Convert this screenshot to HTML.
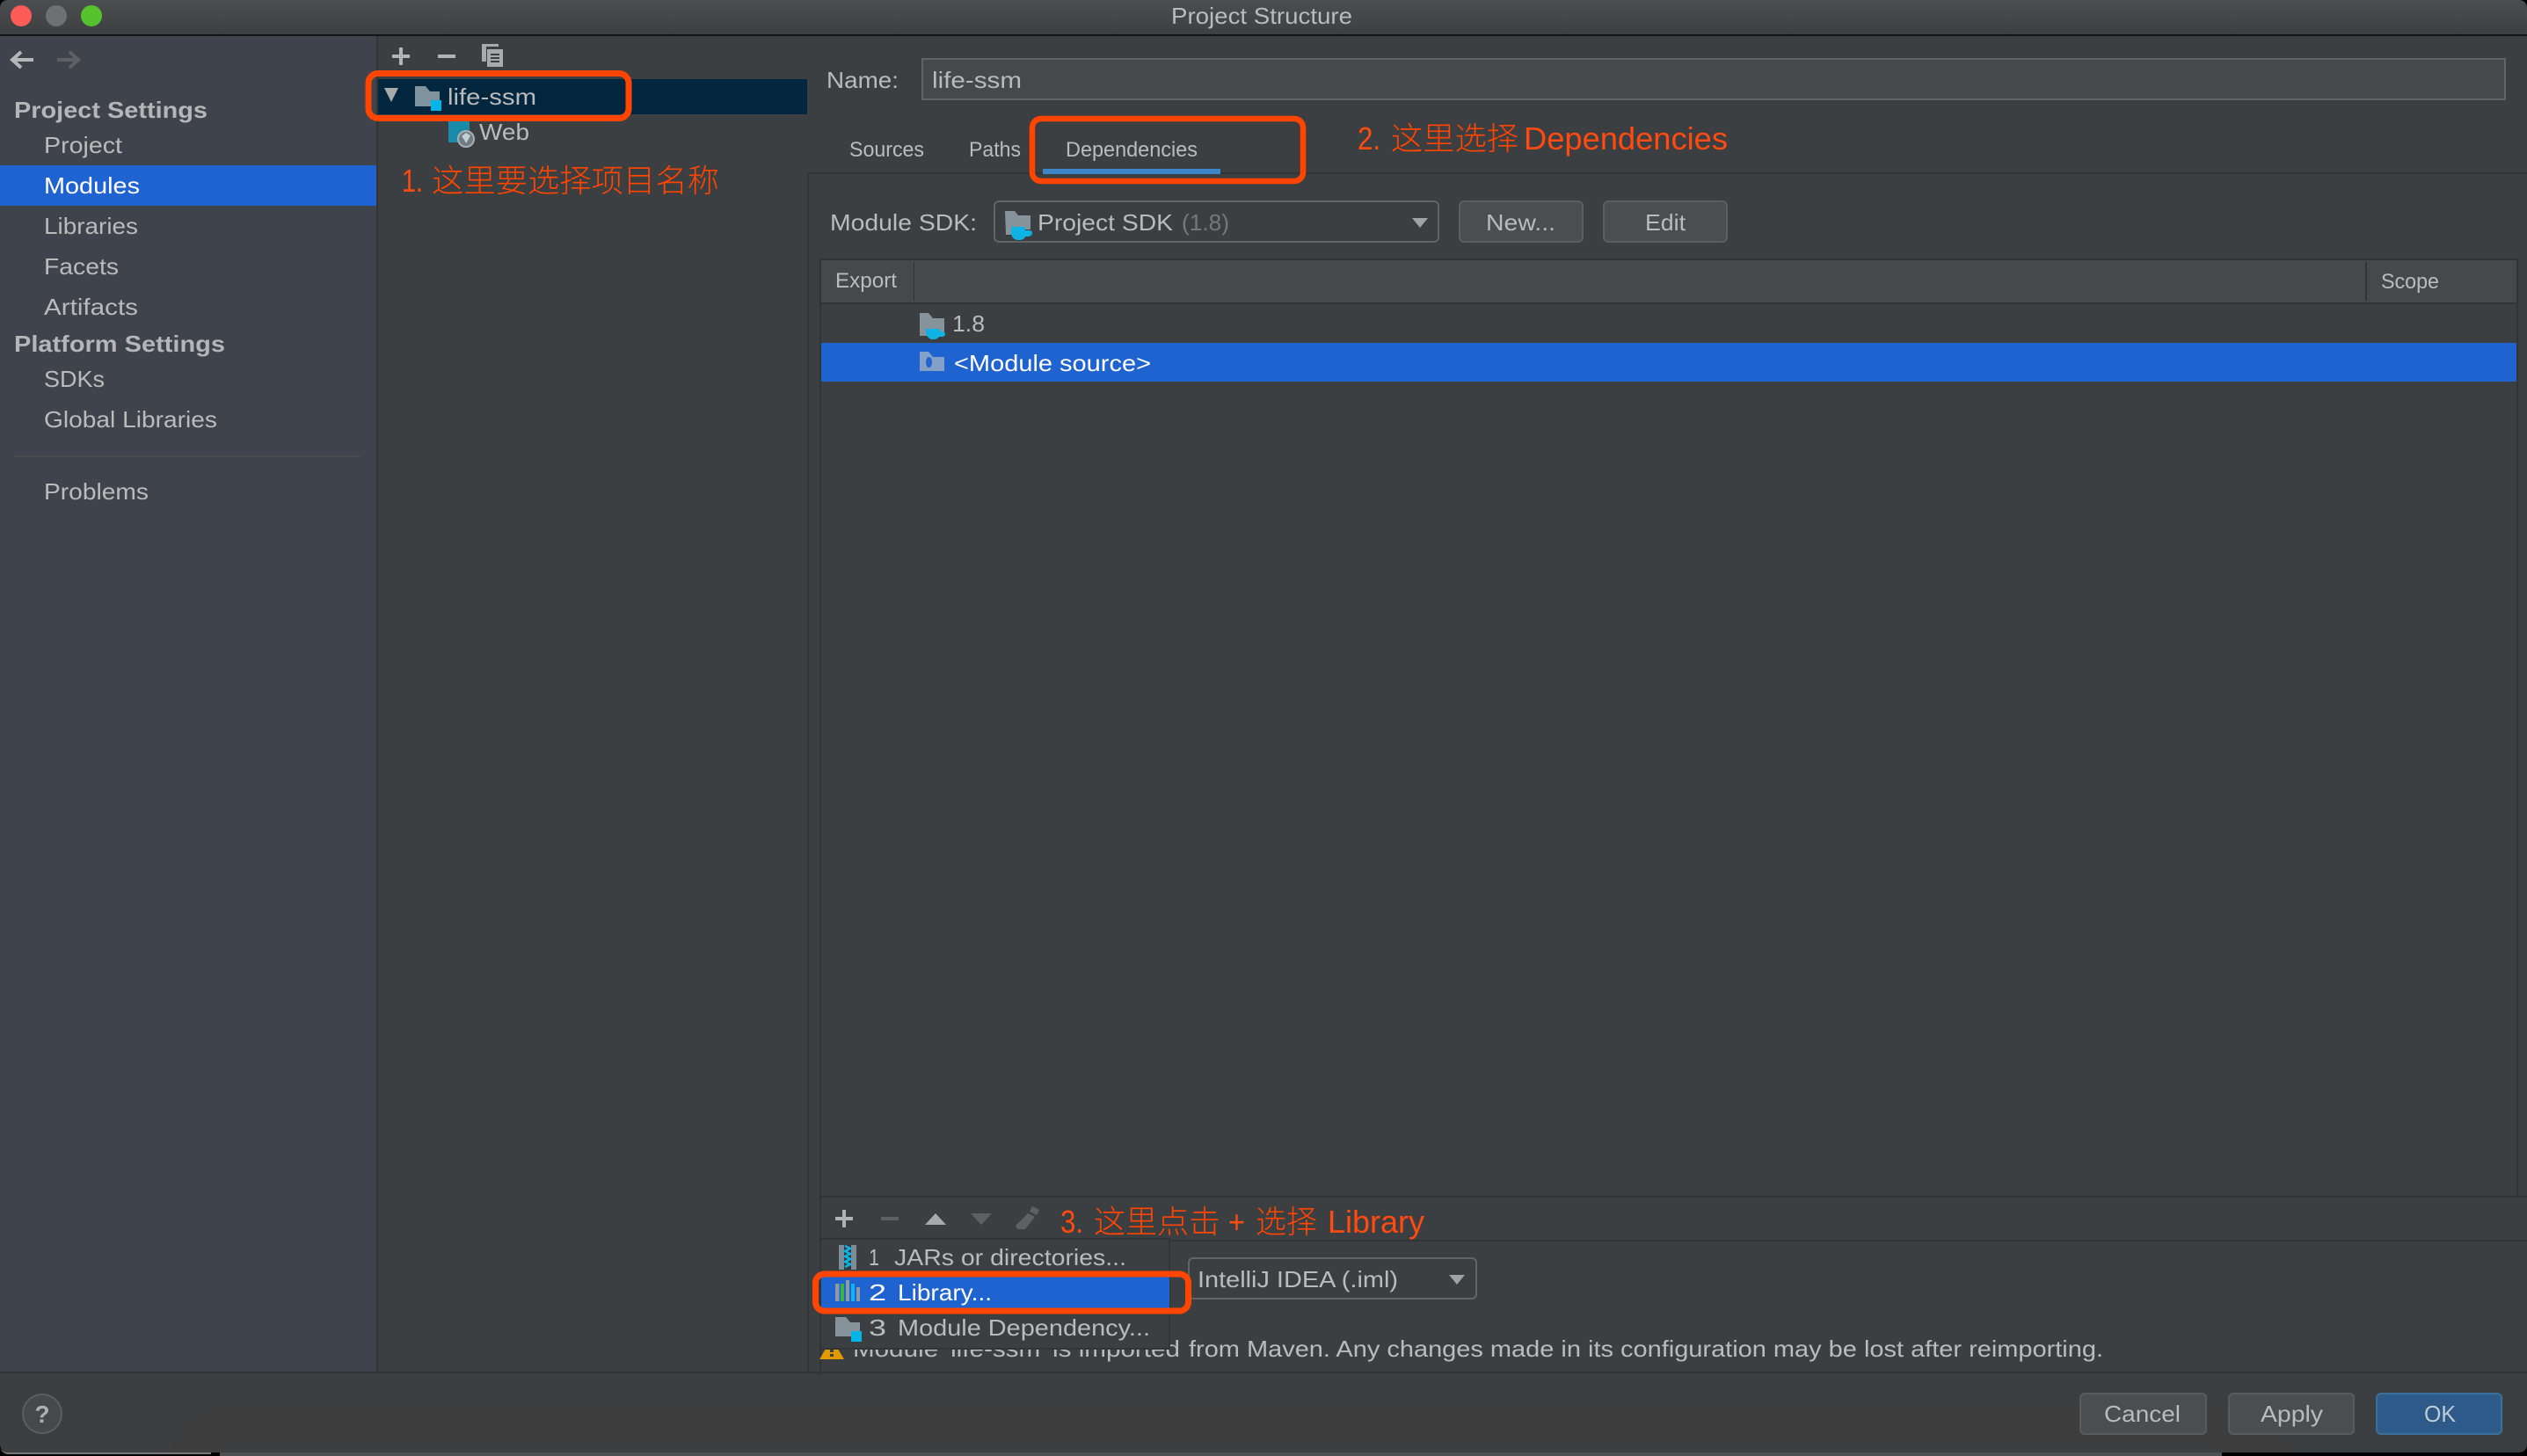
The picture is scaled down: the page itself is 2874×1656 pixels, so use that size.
<!DOCTYPE html>
<html lang="zh">
<head>
<meta charset="utf-8">
<title>Project Structure</title>
<style>
html,body{margin:0;padding:0;background:#000;width:2874px;height:1656px;overflow:hidden}
svg{display:block}
text{font-family:"Liberation Sans","Noto Sans CJK SC",sans-serif;font-size:26px;fill:#bbb;white-space:pre}
.b{font-weight:bold;fill:#b4b6b8}
.w{fill:#fff}
.s{font-size:24px}
.r{font-size:36px;fill:#ff4a10}
.c{font-family:"Noto Sans CJK SC",sans-serif;font-weight:300;font-size:36px;fill:#ff4500}
.box{fill:none;stroke:#ff4500;stroke-width:7}
.ln{fill:#323436}
</style>
</head>
<body>
<svg width="2874" height="1656" viewBox="0 0 2874 1656" xmlns="http://www.w3.org/2000/svg">
<defs>
<linearGradient id="tb" x1="0" y1="0" x2="0" y2="1"><stop offset="0" stop-color="#4b4e50"/><stop offset="1" stop-color="#3e3f41"/></linearGradient>
</defs>
<!-- bottom desktop strip -->
<rect x="0" y="1640" width="2874" height="16" fill="#000"/>
<rect x="250" y="1650" width="2277" height="6" fill="#4d5053"/>
<!-- window -->
<path d="M0 10Q0 0 10 0H2864Q2874 0 2874 10V1642Q2874 1652 2864 1652H10Q0 1652 0 1642Z" fill="#3c3f41"/>
<path d="M10 1652H240V1654H10Q4 1654 0 1648Q4 1652 10 1652Z" fill="#777"/>
<!-- titlebar -->
<path d="M0 10Q0 0 10 0H2864Q2874 0 2874 10V39H0Z" fill="url(#tb)"/>
<rect x="0" y="39" width="2874" height="2" fill="#141516"/>
<circle cx="24" cy="18" r="12" fill="#fc5b57"/>
<circle cx="64" cy="18" r="12" fill="#6e7072"/>
<circle cx="104" cy="18" r="12" fill="#56c22e"/>
<text x="1332" y="27" textLength="206" lengthAdjust="spacingAndGlyphs" fill="#b8b8b8">Project Structure</text>
<!-- sidebar -->
<rect x="0" y="41" width="428" height="1520" fill="#3e434c"/>
<rect x="428" y="41" width="2" height="1520" class="ln"/>
<rect x="918" y="197" width="2" height="1364" class="ln"/>
<rect x="0" y="188" width="428" height="46" fill="#1f63d0"/>
<path d="M38 68H15M24 59l-10 9 10 9" fill="none" stroke="#b4b6b8" stroke-width="4"/>
<path d="M65 68H88M79 59l10 9-10 9" fill="none" stroke="#5e6064" stroke-width="4"/>
<text class="b" x="16" y="134" textLength="220" lengthAdjust="spacingAndGlyphs">Project Settings</text>
<text x="50" y="174" textLength="89" lengthAdjust="spacingAndGlyphs">Project</text>
<text class="w" x="50" y="220" textLength="109" lengthAdjust="spacingAndGlyphs">Modules</text>
<text x="50" y="266" textLength="107" lengthAdjust="spacingAndGlyphs">Libraries</text>
<text x="50" y="312" textLength="85" lengthAdjust="spacingAndGlyphs">Facets</text>
<text x="50" y="358" textLength="107" lengthAdjust="spacingAndGlyphs">Artifacts</text>
<text class="b" x="16" y="400" textLength="240" lengthAdjust="spacingAndGlyphs">Platform Settings</text>
<text x="50" y="440" textLength="69" lengthAdjust="spacingAndGlyphs">SDKs</text>
<text x="50" y="486" textLength="197" lengthAdjust="spacingAndGlyphs">Global Libraries</text>
<rect x="16" y="518" width="394" height="2" fill="#4a4c50"/>
<text x="50" y="568" textLength="119" lengthAdjust="spacingAndGlyphs">Problems</text>
<!-- tree -->
<rect x="446" y="62" width="20" height="4" fill="#b0b2b4"/><rect x="454" y="54" width="4" height="20" fill="#b0b2b4"/>
<rect x="498" y="62" width="20" height="4" fill="#b0b2b4"/>
<path d="M548 50h19v3h-14v17h-5z" fill="#a8aaac"/>
<path d="M554 56h18v20h-18z" fill="#a8aaac"/>
<path d="M558 61h10v2h-10zM558 65h10v2h-10zM558 69h10v2h-10z" fill="#3c3f41"/>
<rect x="430" y="90" width="488" height="40" fill="#03263f"/>
<path d="M437 100h16l-8 16z" fill="#a8aaac"/>
<path d="M472 98h12l5 6h11v17h-28z" fill="#7f939f"/>
<rect x="490" y="114" width="12" height="12" fill="#03b5e6"/>
<text x="509" y="119" textLength="101" lengthAdjust="spacingAndGlyphs">life-ssm</text>
<rect x="510" y="138" width="24" height="24" fill="#1b8aa8"/>
<circle cx="530" cy="158" r="9" fill="#6f7c84" stroke="#a9b0b4" stroke-width="2"/>
<path d="M525 155l5-4 5 3-2 4-3 5-2-4z" fill="#c7ced2"/>
<text x="545" y="159" textLength="57" lengthAdjust="spacingAndGlyphs">Web</text>
<text class="r" x="457" y="218" textLength="24" lengthAdjust="spacingAndGlyphs">1.</text>
<text class="c" x="491" y="218" textLength="327" lengthAdjust="spacingAndGlyphs">这里要选择项目名称</text>
<rect class="box" x="419" y="83.500" width="296" height="51" rx="11"/>
<!-- name -->
<text x="940" y="100" textLength="82" lengthAdjust="spacingAndGlyphs">Name:</text>
<rect x="1049" y="67" width="1800" height="46" fill="#45494a" stroke="#646464" stroke-width="2"/>
<text x="1060" y="100" textLength="102" lengthAdjust="spacingAndGlyphs">life-ssm</text>
<!-- tabs -->
<rect x="920" y="196" width="1954" height="2" class="ln"/>
<text class="s" x="966" y="178" textLength="85" lengthAdjust="spacingAndGlyphs">Sources</text>
<text class="s" x="1102" y="178" textLength="59" lengthAdjust="spacingAndGlyphs">Paths</text>
<text class="s" x="1212" y="178" textLength="150" lengthAdjust="spacingAndGlyphs">Dependencies</text>
<rect x="1186" y="192" width="202" height="6" fill="#3c86c8"/>
<rect class="box" x="1174" y="135" width="308" height="71" rx="10" style="stroke-width:6.500"/>
<text class="r" x="1544" y="170" textLength="26" lengthAdjust="spacingAndGlyphs">2.</text>
<text class="c" x="1582" y="170" textLength="145" lengthAdjust="spacingAndGlyphs">这里选择</text>
<text class="r" x="1733" y="170" textLength="232" lengthAdjust="spacingAndGlyphs">Dependencies</text>
<!-- SDK row -->
<text x="944" y="262" textLength="167" lengthAdjust="spacingAndGlyphs">Module SDK:</text>
<rect x="1131" y="229" width="505" height="46" rx="5" fill="#3c3f41" stroke="#646464" stroke-width="2"/>
<path d="M1143 240h11l4 5h14v16h-14v6h-14z" fill="#87939a"/>
<path d="M1150 258h16v4h4q4 0 4 3t-4 4h-4q-1 4-8 4t-8-8z" fill="#0eb3e3"/>
<text x="1180" y="262" textLength="154" lengthAdjust="spacingAndGlyphs">Project SDK</text>
<text x="1344" y="262" textLength="54" lengthAdjust="spacingAndGlyphs" style="fill:#777">(1.8)</text>
<path d="M1606 248h18l-9 11z" fill="#a0a2a4"/>
<rect x="1660" y="229" width="140" height="46" rx="5" fill="#4a4e50" stroke="#5a5e60" stroke-width="2"/>
<text x="1690" y="262" textLength="79" lengthAdjust="spacingAndGlyphs">New...</text>
<rect x="1824" y="229" width="140" height="46" rx="5" fill="#4a4e50" stroke="#5a5e60" stroke-width="2"/>
<text x="1871" y="262" textLength="46" lengthAdjust="spacingAndGlyphs">Edit</text>
<!-- table -->
<rect x="934" y="296" width="1928" height="48" fill="#45494b"/>
<rect x="932" y="294" width="1932" height="2" class="ln"/>
<rect x="932" y="344" width="1932" height="2" class="ln"/>
<rect x="932" y="294" width="2" height="1270" class="ln"/>
<rect x="2862" y="294" width="2" height="1068" class="ln"/>
<rect x="1039" y="298" width="1" height="44" fill="#323436"/>
<rect x="2690" y="298" width="2" height="44" fill="#323436"/>
<text class="s" x="950" y="327" textLength="70" lengthAdjust="spacingAndGlyphs">Export</text>
<text class="s" x="2708" y="328" textLength="66" lengthAdjust="spacingAndGlyphs">Scope</text>
<path d="M1046 356h10l5 6h13v16h-13v4h-15z" fill="#87939a"/>
<path d="M1053 374h16v3h2q4 0 4 3t-4 3h-3q-2 3-7 3t-8-6z" fill="#0eb3e3"/>
<text x="1083" y="377" textLength="37" lengthAdjust="spacingAndGlyphs">1.8</text>
<rect x="934" y="390" width="1928" height="44" fill="#1f63d0"/>
<path d="M1046 400h10l5 6h13v16h-28z" fill="#83a0c9"/>
<ellipse cx="1056.500" cy="412" rx="3.500" ry="6" fill="#1f63d0"/>
<text class="w" x="1085" y="422" textLength="224" lengthAdjust="spacingAndGlyphs">&lt;Module source&gt;</text>
<!-- bottom toolbar -->
<rect x="934" y="1360" width="1940" height="2" class="ln"/>
<rect x="934" y="1410" width="1940" height="2" class="ln"/>
<rect x="950" y="1384" width="20" height="4" fill="#b0b2b4"/><rect x="958" y="1376" width="4" height="20" fill="#b0b2b4"/>
<rect x="1002" y="1384" width="20" height="4" fill="#5e6062"/>
<path d="M1064 1380l12 13h-24z" fill="#a8aaac"/>
<path d="M1104 1380h24l-12 13z" fill="#5e6062"/>
<path d="M1174 1372l8 4-3 6-8-4zM1169 1380l8 4-11 14h-9l-2-4z" fill="#5e6062"/>
<text class="r" x="1206" y="1402" textLength="26" lengthAdjust="spacingAndGlyphs">3.</text>
<text class="c" x="1244" y="1402" textLength="144" lengthAdjust="spacingAndGlyphs">这里点击</text>
<text class="r" x="1397" y="1402" textLength="19" lengthAdjust="spacingAndGlyphs">+</text>
<text class="c" x="1428" y="1402" textLength="70" lengthAdjust="spacingAndGlyphs">选择</text>
<text class="r" x="1510" y="1402" textLength="110" lengthAdjust="spacingAndGlyphs">Library</text>
<!-- warning -->
<path d="M946 1522l14 24h-28z" fill="#e09a00"/>
<rect x="944" y="1530" width="4" height="8" fill="#3c3f41"/><rect x="944" y="1540" width="4" height="3" fill="#3c3f41"/>
<text x="970" y="1543" textLength="372" lengthAdjust="spacingAndGlyphs">Module 'life-ssm' is imported</text>
<text x="1352" y="1543" textLength="1040" lengthAdjust="spacingAndGlyphs">from Maven. Any changes made in its configuration may be lost after reimporting.</text>
<!-- IML combo -->
<rect x="1352" y="1431" width="327" height="46" rx="5" fill="#3c3f41" stroke="#646464" stroke-width="2"/>
<text x="1362" y="1464" textLength="228" lengthAdjust="spacingAndGlyphs">IntelliJ IDEA (.iml)</text>
<path d="M1648 1450h18l-9 11z" fill="#a0a2a4"/>
<!-- popup -->
<rect x="933" y="1409" width="397" height="125" fill="#3c3f41" stroke="#323436" stroke-width="2"/>
<rect x="934" y="1452" width="396" height="36" fill="#1f63d0"/>
<rect x="954" y="1416" width="20" height="28" fill="#7f8c93"/>
<rect x="960" y="1416" width="8" height="28" fill="#2f3a40"/>
<path d="M961 1417l6 3-6 3 6 3-6 3 6 3-6 3 6 3-6 3" fill="none" stroke="#0eb3e3" stroke-width="2.500"/>
<text x="988" y="1439" textLength="12" lengthAdjust="spacingAndGlyphs">1</text>
<text x="1017" y="1439" textLength="264" lengthAdjust="spacingAndGlyphs">JARs or directories...</text>
<rect x="950" y="1460" width="4.500" height="20" fill="#8c9aa6"/>
<rect x="956" y="1460" width="4" height="20" fill="#3cb33c"/>
<rect x="962" y="1456" width="4" height="24" fill="#8c9aa6"/>
<rect x="968" y="1460" width="4" height="20" fill="#0fb5e8"/>
<rect x="974" y="1464" width="4" height="16" fill="#8c9aa6"/>
<text class="w" x="988" y="1479" textLength="20" lengthAdjust="spacingAndGlyphs">2</text>
<text class="w" x="1021" y="1479" textLength="107" lengthAdjust="spacingAndGlyphs">Library...</text>
<path d="M950 1498h12l5 6h11v16h-28z" fill="#87939a"/>
<rect x="968" y="1514" width="12" height="12" fill="#03b5e6"/>
<text x="988" y="1519" textLength="20" lengthAdjust="spacingAndGlyphs">3</text>
<text x="1021" y="1519" textLength="287" lengthAdjust="spacingAndGlyphs">Module Dependency...</text>
<rect class="box" x="927.500" y="1449" width="424" height="42" rx="10"/>
<!-- footer -->
<rect x="0" y="1560" width="2874" height="2" class="ln"/>
<path d="M190 1652Q220 1596 280 1596H2540Q2580 1620 2610 1652Z" fill="#3e3d3e"/>
<path d="M250 1652Q260 1640 290 1636H2500L2527 1652Z" fill="#3c3e40"/>
<circle cx="48" cy="1608" r="22" fill="#45494a" stroke="#5a5e5e" stroke-width="2"/>
<text x="48" y="1618" text-anchor="middle" style="font-weight:bold;font-size:28px;fill:#adb0b2">?</text>
<rect x="2366" y="1585" width="143" height="46" rx="5" fill="#4a4e50" stroke="#585c5e" stroke-width="2"/>
<text x="2393" y="1617" textLength="87" lengthAdjust="spacingAndGlyphs">Cancel</text>
<rect x="2535" y="1585" width="142" height="46" rx="5" fill="#4a4e50" stroke="#585c5e" stroke-width="2"/>
<text x="2571" y="1617" textLength="71" lengthAdjust="spacingAndGlyphs">Apply</text>
<rect x="2703" y="1585" width="142" height="46" rx="5" fill="#2d5a88" stroke="#3a7199" stroke-width="2"/>
<text x="2757" y="1617" textLength="36" lengthAdjust="spacingAndGlyphs" style="fill:#c0cad4">OK</text>
</svg>
</body>
</html>
